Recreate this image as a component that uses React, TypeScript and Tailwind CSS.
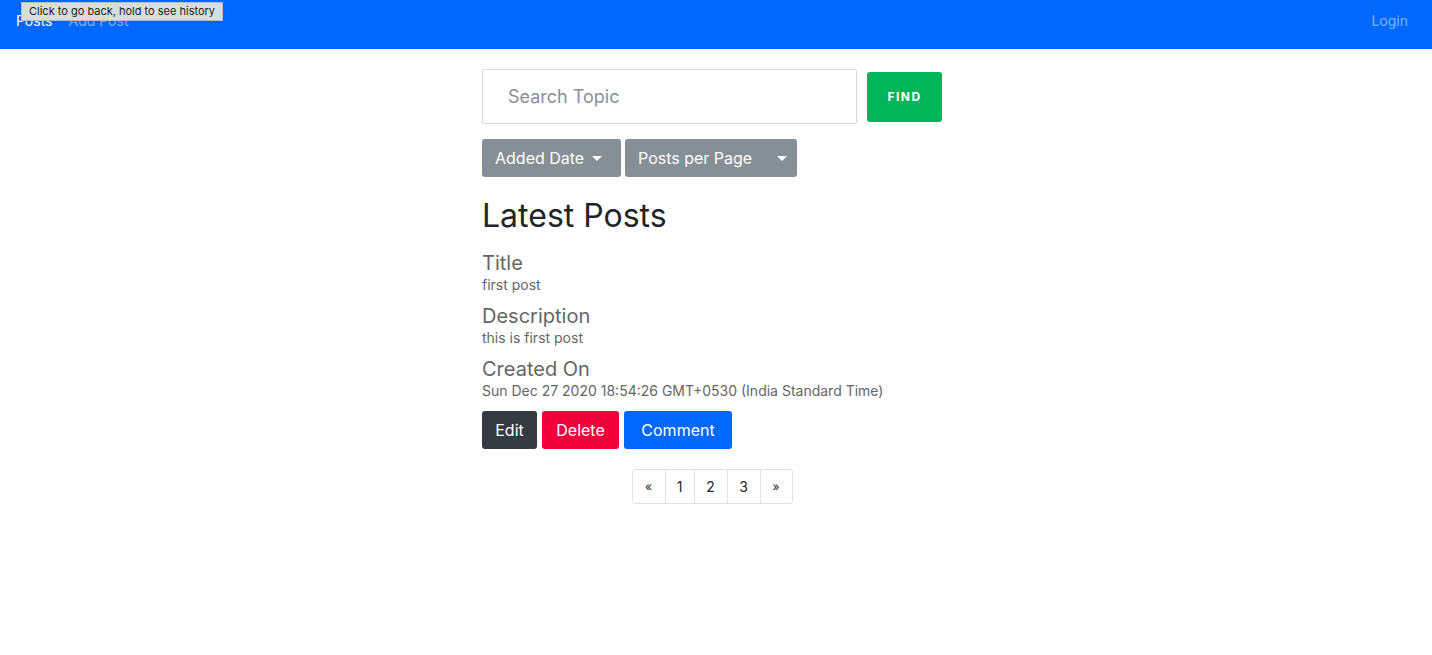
function Caret() {
  return (
    <span className="ml-2 inline-block h-0 w-0 border-x-[5px] border-t-[5px] border-x-transparent border-t-white align-middle" />
  );
}

export default function App() {
  const rows = [
    { label: "Title", value: "first post" },
    { label: "Description", value: "this is first post" },
    { label: "Created On", value: "Sun Dec 27 2020 18:54:26 GMT+0530 (India Standard Time)" },
  ];

  return (
    <div className="min-h-[655px] bg-white font-['Inter',sans-serif] text-[#212529]">
      <nav className="relative flex h-[49px] items-center justify-between bg-[#0068ff] px-4 pb-2 text-[14px]">
        <div className="flex items-center gap-4">
          <a className="text-white">Posts</a>
          <a className="text-white/50">Add Post</a>
        </div>
        <a className="pr-2 text-white/50">Login</a>
        {/* browser back-button tooltip captured in the screenshot */}
        <div className="absolute left-[21px] top-[2px] border border-[#b9bec4] bg-[#d9dcdf] px-[7px] py-[1px] text-[11px] leading-[15px] text-[#222] shadow-sm">
          Click to go back, hold to see history
        </div>
      </nav>

      <div className="mx-auto w-[468px] pr-2 pt-5">
        <div className="flex items-center gap-[10px]">
          <input
            className="h-[55px] w-[375px] rounded-[2px] border border-[#d8dbde] px-[25px] text-[18px] placeholder:text-[#8a9097] focus:outline-none"
            placeholder="Search Topic"
          />
          <button className="h-[50px] w-[75px] rounded-[3px] bg-[#00b559] text-[12px] font-bold tracking-[0.12em] text-white">
            FIND
          </button>
        </div>

        <div className="mt-[15px] flex gap-1">
          <button className="flex h-[38px] w-[139px] items-center rounded-[3px] bg-[#868e96] pl-[13px] text-[16px] text-white">
            Added Date
            <Caret />
          </button>
          <button className="flex h-[38px] w-[172px] items-center justify-between rounded-[3px] bg-[#868e96] pl-[13px] pr-[10px] text-[16px] text-white">
            Posts per Page
            <Caret />
          </button>
        </div>

        <h2 className="mt-[20px] text-[32px] leading-[38px] text-[#212529]">Latest Posts</h2>

        <div className="mt-[16px] flex flex-col gap-[10px]">
          {rows.map((r) => (
            <div key={r.label}>
              <div className="text-[20px] leading-[24px] text-[#666]">{r.label}</div>
              <div className="text-[14px] leading-[19px] text-[#666]">{r.value}</div>
            </div>
          ))}
        </div>

        <div className="mt-[11px] flex gap-[5px] text-[16px] text-white">
          <button className="h-[38px] w-[55px] rounded-[3px] bg-[#343a40]">Edit</button>
          <button className="h-[38px] w-[77px] rounded-[3px] bg-[#ef0039]">Delete</button>
          <button className="h-[38px] w-[108px] rounded-[3px] bg-[#0068ff]">Comment</button>
        </div>

        <div className="mt-[20px] flex justify-center">
          <div className="flex h-[35px] overflow-hidden rounded-[3px] border border-[#dee2e6] text-[14px] text-[#212529]">
            <span className="flex w-[32px] items-center justify-center text-[12px]">«</span>
            <span className="flex w-[29px] items-center justify-center border-l border-[#dee2e6]">1</span>
            <span className="flex w-[33px] items-center justify-center border-l border-[#dee2e6]">2</span>
            <span className="flex w-[33px] items-center justify-center border-l border-[#dee2e6]">3</span>
            <span className="flex w-[32px] items-center justify-center border-l border-[#dee2e6] text-[12px]">»</span>
          </div>
        </div>
      </div>
    </div>
  );
}
